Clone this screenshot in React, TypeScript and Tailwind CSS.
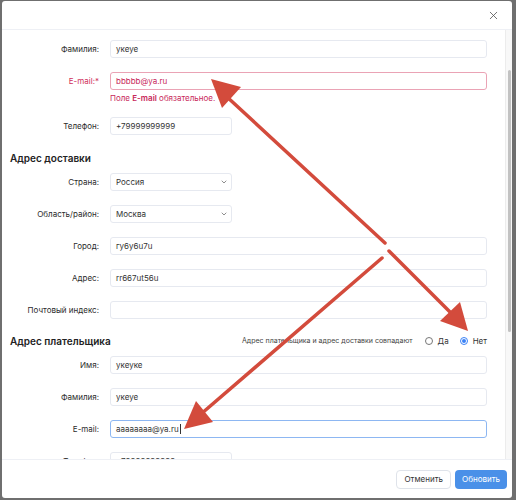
import { ChevronDown, X } from "lucide-react";
import type { ReactNode } from "react";

const font = { fontFamily: "Inter, 'Noto Sans', sans-serif" };

function Row({
  label,
  children,
  error,
  className = "mb-[14px]"
}: {
  label: ReactNode;
  children: ReactNode;
  error?: boolean;
  className?: string;
}) {
  return (
    <div className={`flex items-center ${className}`}>
      <div className={`w-[97px] shrink-0 text-right text-[8px] ${error ? "text-[#d0305c]" : "text-[#2b2b2b]"}`}>{label}</div>
      <div className="ml-[11px] flex min-w-0 flex-1">{children}</div>
    </div>
  );
}

function Field({ value, short, tone = "normal" }: { value: string; short?: boolean; tone?: "normal" | "error" | "focus" }) {
  const border =
    tone === "error" ? "border-[#eaa3b5] text-[#c8285a]" : tone === "focus" ? "border-[#8db7f2] text-[#333]" : "border-[#e6e9f0] text-[#333]";
  return (
    <div className={`flex h-[18px] items-center rounded-[3px] border bg-white px-[5px] text-[8px] ${border} ${short ? "w-[122px]" : "w-full"}`}>
      {value}
      {tone === "focus" && <span className="ml-px h-[10px] w-px bg-[#333]" />}
    </div>
  );
}

function Select({ value }: { value: string }) {
  return (
    <div className="flex h-[18px] w-[122px] items-center justify-between rounded-[3px] border border-[#e6e9f0] bg-white pl-[5px] pr-[3px] text-[8px] text-[#333]">
      {value}
      <ChevronDown className="h-[8px] w-[8px] text-[#555]" strokeWidth={2} />
    </div>
  );
}

function Radio({ checked, label }: { checked?: boolean; label: string }) {
  return (
    <div className="flex items-center gap-[5px]">
      <span
        className={`flex h-[8px] w-[8px] items-center justify-center rounded-full border ${checked ? "border-[#3b82f6] bg-white" : "border-[#777] bg-white"}`}
      >
        {checked && <span className="h-[4px] w-[4px] rounded-full bg-[#3b82f6]" />}
      </span>
      <span className="text-[8px] text-[#333]">{label}</span>
    </div>
  );
}

function Arrows() {
  const c = "#d34b3c";
  return (
    <svg className="pointer-events-none absolute inset-0" width="516" height="500" viewBox="0 0 516 500">
      <g stroke={c} strokeWidth="3.5" strokeLinecap="round">
        <line x1="385" y1="243" x2="226" y2="96" />
        <line x1="389" y1="251" x2="453" y2="315" />
        <line x1="382" y1="258" x2="201" y2="414" />
      </g>
      <g fill={c}>
        <polygon points="211,79 241,87 222,108" />
        <polygon points="468,331 440,321 460,302" />
        <polygon points="184,429 213,422 196,401" />
      </g>
    </svg>
  );
}

export default function App() {
  return (
    <div className="relative h-[500px] w-[516px] overflow-hidden bg-[#6f6f6f]" style={font}>
      <div className="ml-[2px] mt-px flex h-[497px] w-[510px] flex-col overflow-hidden rounded-[3px] bg-white">
        <div className="flex h-[29px] shrink-0 items-center justify-end border-b border-[#eef0f5] pr-[12px]">
          <X className="h-[13px] w-[13px] text-[#555]" strokeWidth={1.5} />
        </div>

        <div className="flex min-h-0 flex-1">
          <div className="min-w-0 flex-1 overflow-hidden pr-[18px] pt-[10px]">
            <Row label="Фамилия:">
              <Field value="укеуе" />
            </Row>
            <Row label="E-mail:*" error className="mb-[3px]">
              <Field value="bbbbb@ya.ru" tone="error" />
            </Row>
            <div className="mb-[14px] ml-[108px] flex h-[10px] items-center text-[8px] text-[#c8285a]">
              Поле&nbsp;<b className="font-semibold">E-mail</b>&nbsp;обязательное.
            </div>
            <Row label="Телефон:" className="mb-[17px]">
              <Field value="+79999999999" short />
            </Row>

            <h2 className="mb-[9px] flex h-[12px] items-center pl-[8px] text-[10px] font-semibold text-[#222]">Адрес доставки</h2>
            <Row label="Страна:">
              <Select value="Россия" />
            </Row>
            <Row label="Область/район:">
              <Select value="Москва" />
            </Row>
            <Row label="Город:">
              <Field value="гу6у6u7u" />
            </Row>
            <Row label="Адрес:">
              <Field value="rr667ut56u" />
            </Row>
            <Row label="Почтовый индекс:" className="mb-[16px]">
              <Field value="" />
            </Row>

            <div className="mb-[9px] flex h-[12px] items-center justify-between pl-[8px]">
              <h2 className="text-[10px] font-semibold text-[#222]">Адрес плательщика</h2>
              <div className="flex items-center gap-[12px]">
                <span className="text-[7px] text-[#444]">Адрес плательщика и адрес доставки совпадают</span>
                <div className="flex items-center gap-[11px]">
                  <Radio label="Да" />
                  <Radio label="Нет" checked />
                </div>
              </div>
            </div>
            <Row label="Имя:">
              <Field value="укеуке" />
            </Row>
            <Row label="Фамилия:">
              <Field value="укеуе" />
            </Row>
            <Row label="E-mail:">
              <Field value="аааааааа@ya.ru" tone="focus" />
            </Row>
            <Row label="Телефон:">
              <Field value="+79999999999" short />
            </Row>
          </div>
          <div className="w-[7px] shrink-0 border-l border-[#ececec] bg-[#f8f8f8] pl-[2px] pr-[1px] pt-[40px]">
            <div className="h-[262px] rounded-full bg-[#c2c2c2]" />
          </div>
        </div>

        <div className="flex h-[39px] shrink-0 items-center justify-end gap-[4px] border-t border-[#eef0f5] pr-[5px]">
          <button className="h-[19px] rounded-[4px] border border-[#dfe3ea] bg-white px-[7px] text-[8px] text-[#333]">Отменить</button>
          <button className="h-[19px] rounded-[4px] bg-[#4a90e8] px-[7px] text-[8px] text-white">Обновить</button>
        </div>
      </div>
      <Arrows />
    </div>
  );
}
